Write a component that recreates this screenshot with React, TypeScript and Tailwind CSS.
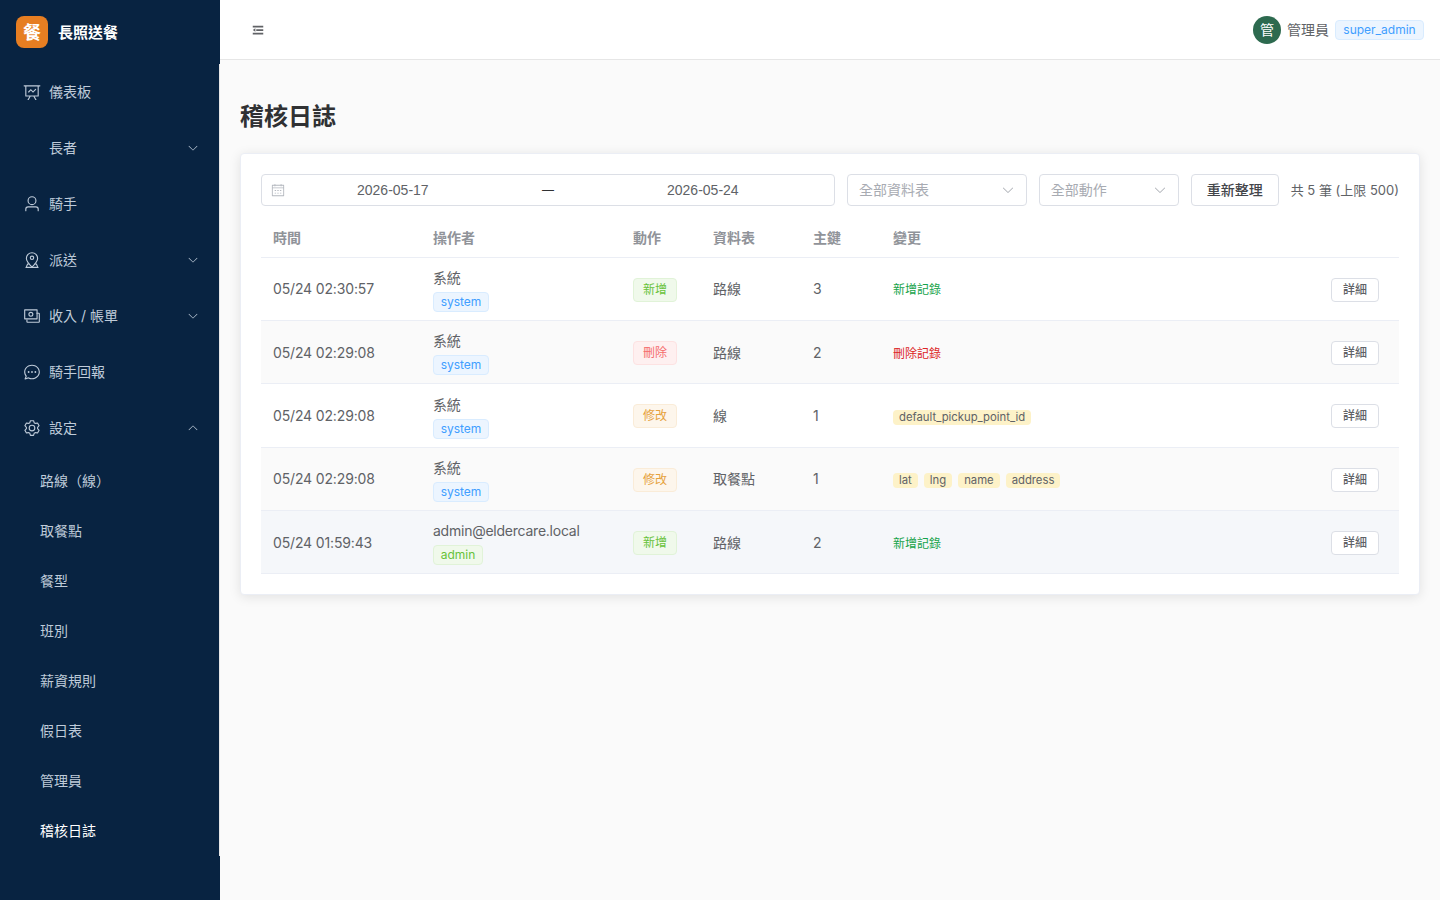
import React from "react";

const arrowDown = "M831.872 340.864 512 652.672 192.128 340.864a30.592 30.592 0 0 0-42.752 0 29.12 29.12 0 0 0 0 41.6L489.664 714.24a32 32 0 0 0 44.672 0l340.288-331.712a29.12 29.12 0 0 0 0-41.6 30.592 30.592 0 0 0-42.752 0z";

const icons: Record<string, string[]> = {
    fold: ["M896 192H128v128h768V192zm0 256H384v128h512V448zm0 256H128v128h768V704zM320 384 128 512l192 128V384z"],
    dataLine: ["M359.168 768H160a32 32 0 0 1-32-32V192H64a32 32 0 0 1 0-64h896a32 32 0 1 1 0 64h-64v544a32 32 0 0 1-32 32H665.216l110.848 192h-73.856L591.36 768H433.024L322.176 960H248.32l110.848-192zM832 192H192v512h640V192zM342.656 534.656a32 32 0 0 1-45.312-45.312L444.8 341.888l125.952 125.952L696.96 341.76a32 32 0 0 1 45.312 45.248L570.752 558.464 444.8 432.512l-102.144 102.144z"],
    user: ["M512 512a192 192 0 1 0 0-384 192 192 0 0 0 0 384zm0 64a256 256 0 1 1 0-512 256 256 0 0 1 0 512zm320 320v-96a96 96 0 0 0-96-96H288a96 96 0 0 0-96 96v96a32 32 0 1 1-64 0v-96a160 160 0 0 1 160-160h448a160 160 0 0 1 160 160v96a32 32 0 1 1-64 0z"],
    map: [
        "M800 416a288 288 0 1 0-576 0c0 118.144 94.528 272.128 288 456.576C705.472 688.128 800 534.144 800 416zM512 960C277.312 746.688 160 565.312 160 416a352 352 0 0 1 704 0c0 149.312-117.312 330.688-352 544z",
        "M512 448a64 64 0 1 0 0-128 64 64 0 0 0 0 128zm0 64a128 128 0 1 1 0-256 128 128 0 0 1 0 256z",
        "M240 704h120l50 64H286l-60 128h572l-60-128H614l50-64h120l110 256H130z",
    ],
    money: [
        "M256 640v192h640V384H768v-64h128a64 64 0 0 1 64 64v448a64 64 0 0 1-64 64H256a64 64 0 0 1-64-64v-128h64z",
        "M128 192v448h640V192H128zm-32-64h704a32 32 0 0 1 32 32v512a32 32 0 0 1-32 32H96a32 32 0 0 1-32-32V160a32 32 0 0 1 32-32z",
        "M448 560a144 144 0 1 1 0-288 144 144 0 0 1 0 288zm0-64a80 80 0 1 0 0-160 80 80 0 0 0 0 160z",
    ],
    chat: [
        "m174.72 855.68 135.296-45.12 23.68 11.84C388.096 849.536 448.576 864 512 864c211.84 0 384-166.784 384-352S723.84 160 512 160 128 326.784 128 512c0 69.12 24.96 139.264 70.848 199.232l22.08 28.8-46.272 115.584zm-45.248 82.56A32 32 0 0 1 89.6 896l58.368-145.92C94.72 680.32 64 596.864 64 512 64 299.904 256 96 512 96s448 203.904 448 416-192 416-448 416a461.056 461.056 0 0 1-206.912-48.384l-175.616 58.56z",
        "M512 563.2a51.2 51.2 0 1 1 0-102.4 51.2 51.2 0 0 1 0 102.4zm192 0a51.2 51.2 0 1 1 0-102.4 51.2 51.2 0 0 1 0 102.4zm-384 0a51.2 51.2 0 1 1 0-102.4 51.2 51.2 0 0 1 0 102.4z",
    ],
    setting: ["M600.704 64a32 32 0 0 1 30.464 22.208l35.2 109.376c14.784 7.232 28.928 15.36 42.432 24.512l112.384-24.192a32 32 0 0 1 34.432 15.36L944.32 364.8a32 32 0 0 1-4.032 37.504l-77.12 85.12a357.12 357.12 0 0 1 0 49.024l77.12 85.248a32 32 0 0 1 4.032 37.504l-88.704 153.6a32 32 0 0 1-34.432 15.296L708.8 803.904c-13.44 9.088-27.648 17.28-42.368 24.512l-35.264 109.376A32 32 0 0 1 600.704 960H423.296a32 32 0 0 1-30.464-22.208L357.696 828.48a351.616 351.616 0 0 1-42.56-24.64l-112.32 24.256a32 32 0 0 1-34.432-15.36L79.68 659.2a32 32 0 0 1 4.032-37.504l77.12-85.248a357.12 357.12 0 0 1 0-48.896l-77.12-85.248A32 32 0 0 1 79.68 364.8l88.704-153.6a32 32 0 0 1 34.432-15.296l112.32 24.256c13.568-9.152 27.776-17.408 42.56-24.64l35.2-109.312A32 32 0 0 1 423.232 64H600.64zm-23.424 64H446.72l-36.352 113.088-24.512 11.968a294.113 294.113 0 0 0-34.816 20.096l-22.656 15.36-116.224-25.088-65.28 113.152 79.68 88.192-1.92 27.136a293.12 293.12 0 0 0 0 40.192l1.92 27.136-79.808 88.192 65.344 113.152 116.224-25.024 22.656 15.296a294.113 294.113 0 0 0 34.816 20.096l24.512 11.968L446.72 896h130.688l36.48-113.152 24.448-11.904a288.282 288.282 0 0 0 34.752-20.096l22.592-15.296 116.288 25.024 65.28-113.152-79.744-88.192 1.92-27.136a293.12 293.12 0 0 0 0-40.256l-1.92-27.136 79.808-88.128-65.344-113.152-116.288 24.96-22.592-15.232a287.616 287.616 0 0 0-34.752-20.096l-24.448-11.904L577.344 128zM512 320a192 192 0 1 1 0 384 192 192 0 0 1 0-384zm0 64a128 128 0 1 0 0 256 128 128 0 0 0 0-256z"],
    calendar: ["M128 384v512h768V192H768v32a32 32 0 1 1-64 0v-32H320v32a32 32 0 0 1-64 0v-32H128v128h768v64H128zm192-256h384V96a32 32 0 1 1 64 0v32h160a32 32 0 0 1 32 32v768a32 32 0 0 1-32 32H96a32 32 0 0 1-32-32V160a32 32 0 0 1 32-32h160V96a32 32 0 0 1 64 0v32zm-32 384h64a32 32 0 0 1 0 64h-64a32 32 0 0 1 0-64zm0 192h64a32 32 0 1 1 0 64h-64a32 32 0 1 1 0-64zm192-192h64a32 32 0 0 1 0 64h-64a32 32 0 0 1 0-64zm0 192h64a32 32 0 1 1 0 64h-64a32 32 0 1 1 0-64zm192-192h64a32 32 0 1 1 0 64h-64a32 32 0 1 1 0-64zm0 192h64a32 32 0 1 1 0 64h-64a32 32 0 1 1 0-64z"],
};

const Icon = ({ name, className }: { name: string; className: string }) => (
    <svg viewBox="0 0 1024 1024" fill="currentColor" className={className}>
        {(icons[name] || [arrowDown]).map(d => <path key={d} d={d} />)}
    </svg>
);

const mainMenu = [
    { label: "儀表板", icon: "dataLine" },
    { label: "長者", arrow: "down" },
    { label: "騎手", icon: "user" },
    { label: "派送", icon: "map", arrow: "down" },
    { label: "收入 / 帳單", icon: "money", arrow: "down" },
    { label: "騎手回報", icon: "chat" },
    { label: "設定", icon: "setting", arrow: "up" },
];

const subMenu = ["路線（線）", "取餐點", "餐型", "班別", "薪資規則", "假日表", "管理員", "稽核日誌"];

type Row = {
    time: string;
    name: string;
    role: "system" | "admin";
    action: "新增" | "刪除" | "修改";
    table: string;
    id: string;
    fields?: string[];
    bg: string;
};

const rows: Row[] = [
    { time: "05/24 02:30:57", name: "系統", role: "system", action: "新增", table: "路線", id: "3", bg: "bg-white" },
    { time: "05/24 02:29:08", name: "系統", role: "system", action: "刪除", table: "路線", id: "2", bg: "bg-[#fafafa]" },
    { time: "05/24 02:29:08", name: "系統", role: "system", action: "修改", table: "線", id: "1", fields: ["default_pickup_point_id"], bg: "bg-white" },
    { time: "05/24 02:29:08", name: "系統", role: "system", action: "修改", table: "取餐點", id: "1", fields: ["lat", "lng", "name", "address"], bg: "bg-[#fafafa]" },
    { time: "05/24 01:59:43", name: "admin@eldercare.local", role: "admin", action: "新增", table: "路線", id: "2", bg: "bg-[#f5f7fa]" },
];

const actionTag = {
    新增: "bg-[#f0f9eb] border-[#e1f3d8] text-[#67c23a]",
    刪除: "bg-[#fef0f0] border-[#fde2e2] text-[#f56c6c]",
    修改: "bg-[#fdf6ec] border-[#faecd8] text-[#e6a23c]",
};

const Changes = ({ row }: { row: Row }) => {
    if (row.fields) {
        return (
            <div className="flex gap-1.5 mt-[3px]">
                {row.fields.map(f => (
                    <span key={f} className="h-[15px] px-1.5 rounded bg-[#fdf2c8] text-[#606266] text-[11.3px] leading-[15px]">{f}</span>
                ))}
            </div>
        );
    }
    if (row.action === "新增") return <span className="text-xs text-[#16a34a]">新增記錄</span>;
    return <span className="text-xs text-[#dc2626]">刪除記錄</span>;
};

const App: React.FunctionComponent<{}> = () => {
    return (
        <div className="flex h-[900px] overflow-hidden bg-[#fafafa] text-[14px] text-[#606266] font-['Inter','Noto_Sans_CJK_TC',sans-serif]">
            <aside className="w-[220px] shrink-0 bg-[#082341] flex flex-col">
                <div className="h-16 shrink-0 flex items-center px-4 gap-2.5">
                    <div className="w-8 h-8 pt-0.5 rounded-lg bg-[#e67e22] flex items-center justify-center text-white text-lg font-bold">餐</div>
                    <span className="text-white text-[15px] font-bold pt-0.5">長照送餐</span>
                </div>
                <nav className="w-[220px] h-[792px] border-r border-r-[#e6e6e6]">
                    {mainMenu.map(item => (
                        <div key={item.label} className="h-14 flex items-center pl-[23px] pr-5 text-[#bfcbd9]">
                            <span className="w-[18px] h-[18px] mr-2 shrink-0">
                                {item.icon && <Icon name={item.icon} className="w-[18px] h-[18px]" />}
                            </span>
                            <span className="flex-1 pb-0.5">{item.label}</span>
                            {item.arrow && <Icon name="arrow" className={item.arrow === "up" ? "w-3 h-3 rotate-180" : "w-3 h-3"} />}
                        </div>
                    ))}
                    {subMenu.map(label => (
                        <div key={label} className={label === "稽核日誌" ? "h-[50px] pb-0.5 flex items-center pl-10 text-white" : "h-[50px] pb-0.5 flex items-center pl-10 text-[#bfcbd9]"}>
                            {label}
                        </div>
                    ))}
                </nav>
            </aside>

            <div className="flex-1 min-w-0 flex flex-col">
                <header className="h-[60px] shrink-0 bg-white border-b border-[#e6e6e6] flex items-center justify-between pl-[31px] pr-4">
                    <Icon name="fold" className="w-3.5 h-3.5 text-[#606266]" />
                    <div className="flex items-center">
                        <div className="w-7 h-7 rounded-full bg-[#2d6a4f] text-white flex items-center justify-center">管</div>
                        <span className="ml-1.5 mr-1.5">管理員</span>
                        <span className="w-[89px] h-5 rounded border border-[#d9ecff] bg-[#ecf5ff] text-[#409eff] text-xs leading-[18px] text-center">super_admin</span>
                    </div>
                </header>

                <main className="flex-1 px-5 pt-5">
                    <h1 className="text-2xl leading-[34px] font-bold text-[#303133] mt-5 mb-[19px]">稽核日誌</h1>
                    <section className="bg-white rounded border border-[#ebeef5] shadow-[0_2px_12px_rgba(0,0,0,0.1)] p-5">
                        <div className="flex items-center h-8">
                            <div className="w-[574px] h-8 shrink-0 rounded border border-[#dcdfe6] flex items-center pl-[9px] relative font-['Liberation_Sans',sans-serif]">
                                <Icon name="calendar" className="w-3.5 h-3.5 text-[#b4b8bf]" />
                                <span className="absolute left-[95px]">2026-05-17</span>
                                <span className="absolute left-[280px] text-xs text-[#303133]">—</span>
                                <span className="absolute left-[405px]">2026-05-24</span>
                            </div>
                            <div className="w-[180px] h-8 ml-3 pb-0.5 rounded border border-[#dcdfe6] flex items-center justify-between px-[11px] text-[#a8abb2]">
                                全部資料表
                                <Icon name="arrow" className="w-3.5 h-3.5 mt-0.5" />
                            </div>
                            <div className="w-[140px] h-8 ml-3 pb-0.5 rounded border border-[#dcdfe6] flex items-center justify-between px-[11px] text-[#a8abb2]">
                                全部動作
                                <Icon name="arrow" className="w-3.5 h-3.5 mt-0.5" />
                            </div>
                            <button className="w-[88px] h-8 ml-3 pb-0.5 rounded border border-[#dcdfe6] text-[#43454a] font-medium">重新整理</button>
                            <span className="ml-3 mt-0.5 text-[13px] whitespace-nowrap">共 5 筆 (上限 500)</span>
                        </div>

                        <div className="mt-4 h-[35.8px] pb-1 flex items-center border-b border-[#ebeef5] font-bold text-[#909399]">
                            <div className="w-40 pl-3">時間</div>
                            <div className="w-[200px] pl-3">操作者</div>
                            <div className="w-20 pl-3">動作</div>
                            <div className="w-[100px] pl-3">資料表</div>
                            <div className="w-20 pl-3">主鍵</div>
                            <div className="flex-1 pl-3">變更</div>
                        </div>

                        {rows.map((row, i) => (
                            <div key={i} className={`h-[63.33px] flex items-center border-b border-[#ebeef5] ${row.bg}`}>
                                <div className="w-40 pl-3 tracking-[-0.15px]">{row.time}</div>
                                <div className="w-[200px] pl-3 mt-px flex flex-col items-start">
                                    <span className="leading-[21px] tracking-[-0.24px]">{row.name}</span>
                                    <span className={row.role === "system"
                                        ? "w-14 h-5 mt-1 rounded border border-[#d9ecff] bg-[#ecf5ff] text-[#409eff] text-xs leading-[18px] text-center"
                                        : "w-[50px] h-5 mt-1 rounded border border-[#e1f3d8] bg-[#f0f9eb] text-[#67c23a] text-xs leading-[18px] text-center"}>{row.role}</span>
                                </div>
                                <div className="w-20 pl-3 mt-[1.7px]">
                                    <span className={`block w-11 h-6 rounded border text-xs leading-[22px] text-center ${actionTag[row.action]}`}>{row.action}</span>
                                </div>
                                <div className="w-[100px] pl-3">{row.table}</div>
                                <div className="w-20 pl-3">{row.id}</div>
                                <div className="flex-1 pl-3"><Changes row={row} /></div>
                                <button className="w-12 h-6 mt-[1.7px] mr-5 rounded border border-[#dcdfe6] bg-white text-xs text-[#606266] font-medium">詳細</button>
                            </div>
                        ))}
                    </section>
                </main>
            </div>
        </div>
    );
};

export default App;
